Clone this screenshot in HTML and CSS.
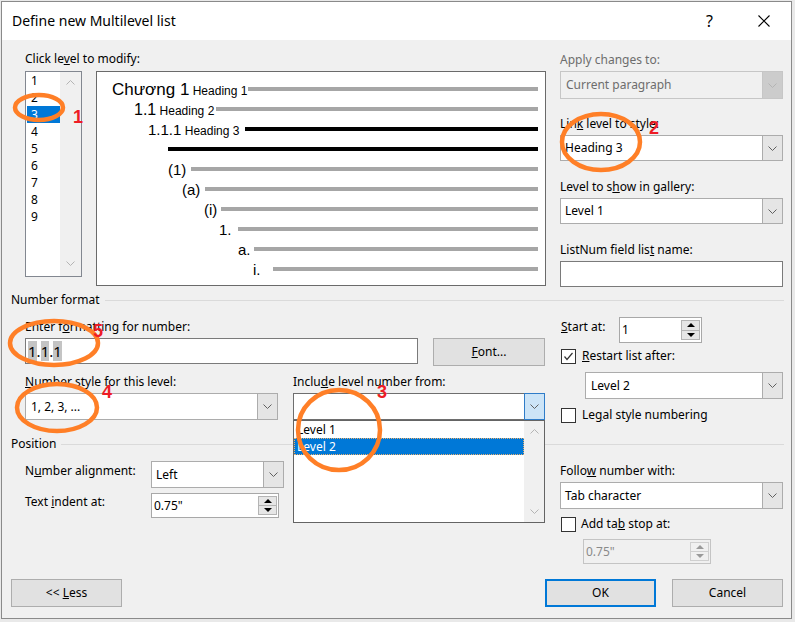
FILE: index.html
```html
<!DOCTYPE html>
<html lang="en">
<head>
<meta charset="utf-8">
<title>Define new Multilevel list</title>
<link rel="stylesheet" href="styles.css">
</head>
<body>
<div class="dialog">
  <div class="titlebar">
    <span class="title">Define new Multilevel list</span>
    <span class="help">?</span>
    <svg class="close" width="12" height="12" viewBox="0 0 12 12"><path d="M0.5 0.5L11.5 11.5M11.5 0.5L0.5 11.5"/></svg>
  </div>

  <div class="content">
    <!-- top section -->
    <div class="sec">
      <div class="col-left">
        <div class="lbl top-lbl">Click le<u>v</u>el to modify:</div>
        <div class="top-row">
          <div class="levels">
            <div class="lv-items">
              <div class="lv">1</div>
              <div class="lv">2</div>
              <div class="lv sel">3</div>
              <div class="lv">4</div>
              <div class="lv">5</div>
              <div class="lv">6</div>
              <div class="lv">7</div>
              <div class="lv">8</div>
              <div class="lv">9</div>
            </div>
            <div class="vscroll lv-scroll">
              <svg class="chev light" width="9" height="5" viewBox="0 0 9 5"><polyline points="0.5,4.5 4.5,0.5 8.5,4.5"/></svg>
              <svg class="chev light" width="9" height="5" viewBox="0 0 9 5"><polyline points="0.5,0.5 4.5,4.5 8.5,0.5"/></svg>
            </div>
          </div>
          <div class="preview">
            <div class="pv-row r1"><span class="pv-lab"><span class="n17">Chương 1</span> <span class="hd">Heading 1</span></span><span class="pv-line"></span></div>
            <div class="pv-row r2"><span class="pv-lab"><span class="n16">1.1</span> <span class="hd">Heading 2</span></span><span class="pv-line"></span></div>
            <div class="pv-row r3"><span class="pv-lab"><span class="n15">1.1.1</span> <span class="hd">Heading 3</span></span><span class="pv-line black"></span></div>
            <div class="pv-row r4"><span class="pv-lab"></span><span class="pv-line black"></span></div>
            <div class="pv-row r5"><span class="pv-lab"><span class="n15">(1)</span></span><span class="pv-line"></span></div>
            <div class="pv-row r6"><span class="pv-lab"><span class="n15">(a)</span></span><span class="pv-line"></span></div>
            <div class="pv-row r7"><span class="pv-lab"><span class="n15">(i)</span></span><span class="pv-line"></span></div>
            <div class="pv-row r8"><span class="pv-lab"><span class="n15">1.</span></span><span class="pv-line"></span></div>
            <div class="pv-row r9"><span class="pv-lab"><span class="n15">a.</span></span><span class="pv-line"></span></div>
            <div class="pv-row r10"><span class="pv-lab"><span class="n15">i.</span></span><span class="pv-line"></span></div>
          </div>
        </div>
      </div>

      <div class="col-right">
        <div class="lbl disabled first-lbl">Apply changes to:</div>
        <div class="combo combo-dis tall">
          <span class="combo-text">Current paragraph</span>
          <span class="combo-btn"><svg class="chev light" width="9" height="5" viewBox="0 0 9 5"><polyline points="0.5,0.5 4.5,4.5 8.5,0.5"/></svg></span>
        </div>
        <div class="lbl gap17">Lin<u>k</u> level to style:</div>
        <div class="combo">
          <span class="combo-text">Heading 3</span>
          <span class="combo-btn"><svg class="chev" width="9" height="5" viewBox="0 0 9 5"><polyline points="0.5,0.5 4.5,4.5 8.5,0.5"/></svg></span>
        </div>
        <div class="lbl gap18">Level to s<u>h</u>ow in gallery:</div>
        <div class="combo">
          <span class="combo-text">Level 1</span>
          <span class="combo-btn"><svg class="chev" width="9" height="5" viewBox="0 0 9 5"><polyline points="0.5,0.5 4.5,4.5 8.5,0.5"/></svg></span>
        </div>
        <div class="lbl gap18">ListNum field lis<u>t</u> name:</div>
        <div class="textbox"></div>
      </div>
    </div>

    <div class="sep sep1"><span>Number format</span></div>

    <!-- number format section -->
    <div class="sec">
      <div class="col-left">
        <div class="lbl fmt-lbl">Enter f<u>o</u>rmatting for number:</div>
        <div class="fmt-row">
          <div class="textbox fmt-input"><span class="shade">1</span>.<span class="shade">1</span>.<span class="shade">1</span></div>
          <div class="btn font-btn"><span><u>F</u>ont...</span></div>
        </div>
        <div class="style-row">
          <div class="cell">
            <div class="lbl"><u>N</u>umber style for this level:</div>
            <div class="combo h27">
              <span class="combo-text">1, 2, 3, ...</span>
              <span class="combo-btn"><svg class="chev" width="9" height="5" viewBox="0 0 9 5"><polyline points="0.5,0.5 4.5,4.5 8.5,0.5"/></svg></span>
            </div>
          </div>
          <div class="cell">
            <div class="lbl">Inclu<u>d</u>e level number from:</div>
            <div class="combo h27 open">
              <span class="combo-text"></span>
              <span class="combo-btn"><svg class="chev" width="9" height="5" viewBox="0 0 9 5"><polyline points="0.5,0.5 4.5,4.5 8.5,0.5"/></svg></span>
              <div class="droplist">
                <div class="dl-items">
                  <div class="dl-item">Level 1</div>
                  <div class="dl-item sel">Level 2</div>
                </div>
                <div class="vscroll dl-scroll">
                  <svg class="chev light" width="9" height="5" viewBox="0 0 9 5"><polyline points="0.5,4.5 4.5,0.5 8.5,4.5"/></svg>
                  <svg class="chev light" width="9" height="5" viewBox="0 0 9 5"><polyline points="0.5,0.5 4.5,4.5 8.5,0.5"/></svg>
                </div>
              </div>
            </div>
          </div>
        </div>
      </div>

      <div class="col-right">
        <div class="start-row">
          <span class="lbl start-lbl"><u>S</u>tart at:</span>
          <div class="spin start-spin">
            <span class="spin-text">1</span>
            <span class="spin-btns"><span class="sb"><i class="tri up"></i></span><span class="sb"><i class="tri down"></i></span></span>
          </div>
        </div>
        <div class="chk-row restart">
          <span class="chk"><svg width="13" height="13" viewBox="0 0 13 13"><polyline points="2.5,6.5 5,9.5 10.5,3"/></svg></span>
          <span class="lbl"><u>R</u>estart list after:</span>
        </div>
        <div class="combo h27 restart-combo">
          <span class="combo-text">Level 2</span>
          <span class="combo-btn"><svg class="chev" width="9" height="5" viewBox="0 0 9 5"><polyline points="0.5,0.5 4.5,4.5 8.5,0.5"/></svg></span>
        </div>
        <div class="chk-row legal">
          <span class="chk"></span>
          <span class="lbl">Le<u>g</u>al style numbering</span>
        </div>
      </div>
    </div>

    <div class="sep sep2"><span>Position</span></div>

    <!-- position section -->
    <div class="sec">
      <div class="col-left">
        <div class="pos-row first">
          <span class="lbl pos-lbl">N<u>u</u>mber alignment:</span>
          <div class="combo h27 align-combo">
            <span class="combo-text">Left</span>
            <span class="combo-btn"><svg class="chev" width="9" height="5" viewBox="0 0 9 5"><polyline points="0.5,0.5 4.5,4.5 8.5,0.5"/></svg></span>
          </div>
        </div>
        <div class="pos-row second">
          <span class="lbl pos-lbl">Text <u>i</u>ndent at:</span>
          <div class="spin h25 indent-spin">
            <span class="spin-text">0.75"</span>
            <span class="spin-btns"><span class="sb"><i class="tri up"></i></span><span class="sb"><i class="tri down"></i></span></span>
          </div>
        </div>
      </div>

      <div class="col-right">
        <div class="lbl follow-lbl">Follo<u>w</u> number with:</div>
        <div class="combo h27">
          <span class="combo-text">Tab character</span>
          <span class="combo-btn"><svg class="chev" width="9" height="5" viewBox="0 0 9 5"><polyline points="0.5,0.5 4.5,4.5 8.5,0.5"/></svg></span>
        </div>
        <div class="chk-row tabstop">
          <span class="chk"></span>
          <span class="lbl">Add ta<u>b</u> stop at:</span>
        </div>
        <div class="spin h25 spin-dis tab-spin">
          <span class="spin-text">0.75"</span>
          <span class="spin-btns"><span class="sb"><i class="tri up"></i></span><span class="sb"><i class="tri down"></i></span></span>
        </div>
      </div>
    </div>

    <div class="buttons">
      <div class="btn less-btn"><span>&lt;&lt; <u>L</u>ess</span></div>
      <div class="spacer"></div>
      <div class="btn ok-btn"><span>OK</span></div>
      <div class="btn cancel-btn"><span>Cancel</span></div>
    </div>
  </div>
</div>

<svg class="annot" width="795" height="622" viewBox="0 0 795 622">
  <g class="rings">
    <ellipse cx="39" cy="107.5" rx="24" ry="12.5"/>
    <ellipse cx="601" cy="142" rx="39" ry="28"/>
    <ellipse cx="339" cy="430" rx="41" ry="40"/>
    <ellipse cx="57" cy="407.5" rx="40" ry="23.5"/>
    <ellipse cx="54" cy="343" rx="44" ry="22"/>
  </g>
  <g class="marks">
    <text x="73" y="123">1</text>
    <text x="649" y="134">2</text>
    <text x="377" y="398">3</text>
    <text x="102" y="398">4</text>
    <text x="93" y="337">5</text>
  </g>
</svg>
</body>
</html>
```

FILE: styles.css
```css
* { box-sizing: border-box; }

body {
  margin: 0;
  background: #e9e9e9;
  font-family: "Noto Sans", "Open Sans", sans-serif;
  font-size: 12px;
  line-height: 16px;
  color: #000;
}

u { text-decoration: underline; text-underline-offset: 1px; }

.dialog {
  width: 791px;
  height: 618px;
  margin: 1px 0 0 1px;
  border: 1px solid #8a8a8a;
  background: #f0f0f0;
}

/* title bar */
.titlebar {
  height: 38px;
  background: #fff;
  display: flex;
  align-items: center;
  padding-left: 10px;
}
.title { flex: 1; font-size: 14px; }
.help { font-size: 16px; margin-right: 45px; }
.close { margin-right: 21px; }
.close path { stroke: #000; stroke-width: 1.1; fill: none; }

.content { padding: 0 7px 0 9px; }

.sec { display: flex; }
.col-left { width: 535px; padding-left: 14px; flex: none; }
.col-right { width: 223px; margin-left: 14px; flex: none; }

.lbl { line-height: 16px; white-space: nowrap; }
.disabled { color: #6d6d6d; }

/* top section */
.top-lbl { margin-top: 11px; }
.top-row { display: flex; margin-top: 4px; }

.levels {
  width: 57px;
  height: 206px;
  border: 1px solid #828790;
  background: #fff;
  display: flex;
}
.lv-items { width: 34px; padding-left: 1px; }
.lv { height: 17px; line-height: 17px; padding-left: 4px; }
.lv.sel { background: #0078d7; color: #fff; }

.vscroll {
  width: 21px;
  background: #f0f0f0;
  display: flex;
  flex-direction: column;
  align-items: center;
  justify-content: space-between;
}
.lv-scroll { padding: 8px 0 10px; }

.chev polyline { fill: none; stroke: #606060; stroke-width: 1; }
.chev.light polyline { stroke: #b4b4b4; }

.preview {
  width: 450px;
  height: 215px;
  margin-left: 14px;
  border: 1px solid #6a6a6a;
  background: #fff;
  padding: 7px 7px 0 0;
  font-family: "Liberation Sans", Arial, sans-serif;
}
.pv-row { display: flex; align-items: center; height: 20px; }
.pv-lab { flex: none; white-space: nowrap; line-height: 20px; position: relative; top: 1px; }
.pv-line { flex: 1; height: 4px; background: #a6a6a6; }
.pv-line.black { background: #000; }
.n17 { font-size: 17px; }
.n16 { font-size: 16px; }
.n15 { font-size: 15px; }
.hd { font-size: 12px; }

.r1 .pv-lab { padding-left: 15px; width: 151px; }
.r2 .pv-lab { padding-left: 37px; width: 119px; }
.r3 .pv-lab { padding-left: 51px; width: 148px; }
.r4 .pv-lab { width: 71px; }
.r5 .pv-lab { padding-left: 71px; width: 94px; }
.r6 .pv-lab { padding-left: 85px; width: 108px; }
.r7 .pv-lab { padding-left: 107px; width: 124px; }
.r8 .pv-lab { padding-left: 122px; width: 141px; }
.r9 .pv-lab { padding-left: 141px; width: 157px; }
.r10 .pv-lab { padding-left: 156px; width: 176px; }

/* right column */
.first-lbl { margin-top: 12px; }
.gap17 { margin-top: 17px; }
.gap18 { margin-top: 18px; }
.col-right > .lbl + .combo,
.col-right > .lbl + .textbox { margin-top: 3px; }

/* combo box */
.combo {
  position: relative;
  display: flex;
  height: 26px;
  border: 1px solid #acacac;
  background: #fff;
}
.combo.tall { height: 28px; }
.combo.h27 { height: 27px; }
.combo-text {
  flex: 1;
  display: flex;
  align-items: center;
  padding-left: 4px;
  white-space: nowrap;
}
.combo-btn {
  width: 20px;
  flex: none;
  background: #e5e5e5;
  border-left: 1px solid #acacac;
  display: flex;
  align-items: center;
  justify-content: center;
}
.combo-dis { background: #f0f0f0; border-color: #c6c6c6; }
.combo-dis .combo-text { color: #6d6d6d; padding-left: 5px; }
.combo-dis .combo-btn { background: #cccccc; border-left-color: #c6c6c6; }

.combo.open { border-color: #6e6e6e; }
.combo.open .combo-btn {
  width: 21px;
  margin: -1px -1px -1px 0;
  background: #cce4f7;
  border: 1px solid #2f7cc8;
}

.textbox {
  height: 26px;
  border: 1px solid #7a7a7a;
  background: #fff;
}

/* separators */
.sep {
  display: flex;
  align-items: center;
  height: 16px;
}
.sep::after {
  content: "";
  flex: 1;
  height: 1px;
  background: #dadada;
  margin-left: 5px;
}
.sep1 { margin-top: 5px; }
.sep2 { margin-top: 13px; }

/* number format section */
.fmt-lbl { margin-top: 11px; }
.fmt-row { display: flex; margin-top: 3px; align-items: flex-start; }
.fmt-input {
  width: 393px;
  padding-left: 2px;
  font-size: 15px;
  line-height: 24px;
}
.shade { background: #c4c4c4; }

.btn {
  height: 28px;
  width: 111px;
  background: #e1e1e1;
  border: 1px solid #adadad;
  display: flex;
  align-items: center;
  justify-content: center;
  white-space: nowrap;
}
.font-btn { width: 112px; margin-left: 15px; }

.style-row {
  display: grid;
  grid-template-columns: 253px 252px;
  column-gap: 15px;
  margin-top: 8px;
}
.cell .combo { margin-top: 3px; }
.cell .combo-text { padding-left: 5px; }

.droplist {
  position: absolute;
  left: -1px;
  right: -1px;
  top: 26px;
  height: 103px;
  border: 1px solid #646464;
  background: #fff;
  display: flex;
  z-index: 5;
}
.dl-items { flex: 1; }
.dl-item { height: 17px; line-height: 16px; padding-left: 2px; border: 1px solid transparent; }
.dl-item.sel { background: #0078d7; color: #fff; border: 1px dotted #e8b070; }
.dl-scroll { width: 20px; padding: 8px 0 8px; }

.start-row { display: flex; margin-top: 9px; }
.start-lbl { width: 59px; padding-left: 1px; margin-top: 2px; }

.spin {
  display: flex;
  height: 26px;
  border: 1px solid #a8a8a8;
  background: #fff;
}
.spin.h25 { height: 25px; }
.start-spin { width: 83px; }
.spin-text { flex: 1; display: flex; align-items: center; padding-left: 2px; }
.spin-btns {
  width: 20px;
  flex: none;
  display: flex;
  flex-direction: column;
  padding: 2px 1px 2px 0;
}
.sb {
  flex: 1;
  background: #e6e6e6;
  border: 1px solid #b4b4b4;
  display: flex;
  align-items: center;
  justify-content: center;
}
.sb + .sb { border-top: none; }
.tri {
  display: block;
  width: 0;
  height: 0;
  border-left: 4px solid transparent;
  border-right: 4px solid transparent;
}
.tri.up { border-bottom: 4px solid #000; }
.tri.down { border-top: 4px solid #000; }

.chk-row { display: flex; align-items: center; height: 16px; }
.chk {
  width: 15px;
  height: 15px;
  margin-left: 1px;
  margin-right: 6px;
  border: 1px solid #333;
  background: #fff;
  display: flex;
  align-items: center;
  justify-content: center;
}
.chk polyline { fill: none; stroke: #333; stroke-width: 1.2; }
.restart { margin-top: 5px; }
.restart-combo { margin-top: 8px; margin-left: 25px; }
.restart-combo .combo-text { padding-left: 5px; }
.legal { margin-top: 8px; }

/* position section */
.pos-row { display: flex; align-items: flex-start; }
.pos-row.first { margin-top: 9px; }
.pos-row.second { margin-top: 5px; }
.pos-lbl { width: 126px; }
.first .pos-lbl { margin-top: 2px; }
.second .pos-lbl { margin-top: 1px; }
.align-combo { width: 133px; }
.indent-spin { width: 128px; }

.follow-lbl { margin-top: 11px; }
.tabstop { margin-top: 7px; }
.tabstop .chk { margin-right: 5px; }
.tab-spin { width: 128px; margin-top: 7px; margin-left: 23px; }
.spin-dis { background: #f0f0f0; border-color: #c4c4c4; color: #8a8a8a; }
.spin-dis .sb { background: #f0f0f0; border-color: #cfcfcf; }
.spin-dis .tri.up { border-bottom-color: #9a9a9a; }
.spin-dis .tri.down { border-top-color: #9a9a9a; }

/* buttons */
.buttons { display: flex; margin-top: 15px; }
.spacer { flex: 1; }
.ok-btn { border: 2px solid #0078d7; }
.cancel-btn { margin-left: 16px; margin-right: 1px; }

/* annotations drawn over the screenshot */
.annot {
  position: absolute;
  left: 0;
  top: 0;
  z-index: 10;
  pointer-events: none;
}
.rings ellipse { fill: none; stroke: #ff7f27; stroke-width: 4.5; }
.marks text {
  fill: #ee1c25;
  font-family: "Liberation Sans", Arial, sans-serif;
  font-weight: bold;
  font-size: 18px;
}
```
